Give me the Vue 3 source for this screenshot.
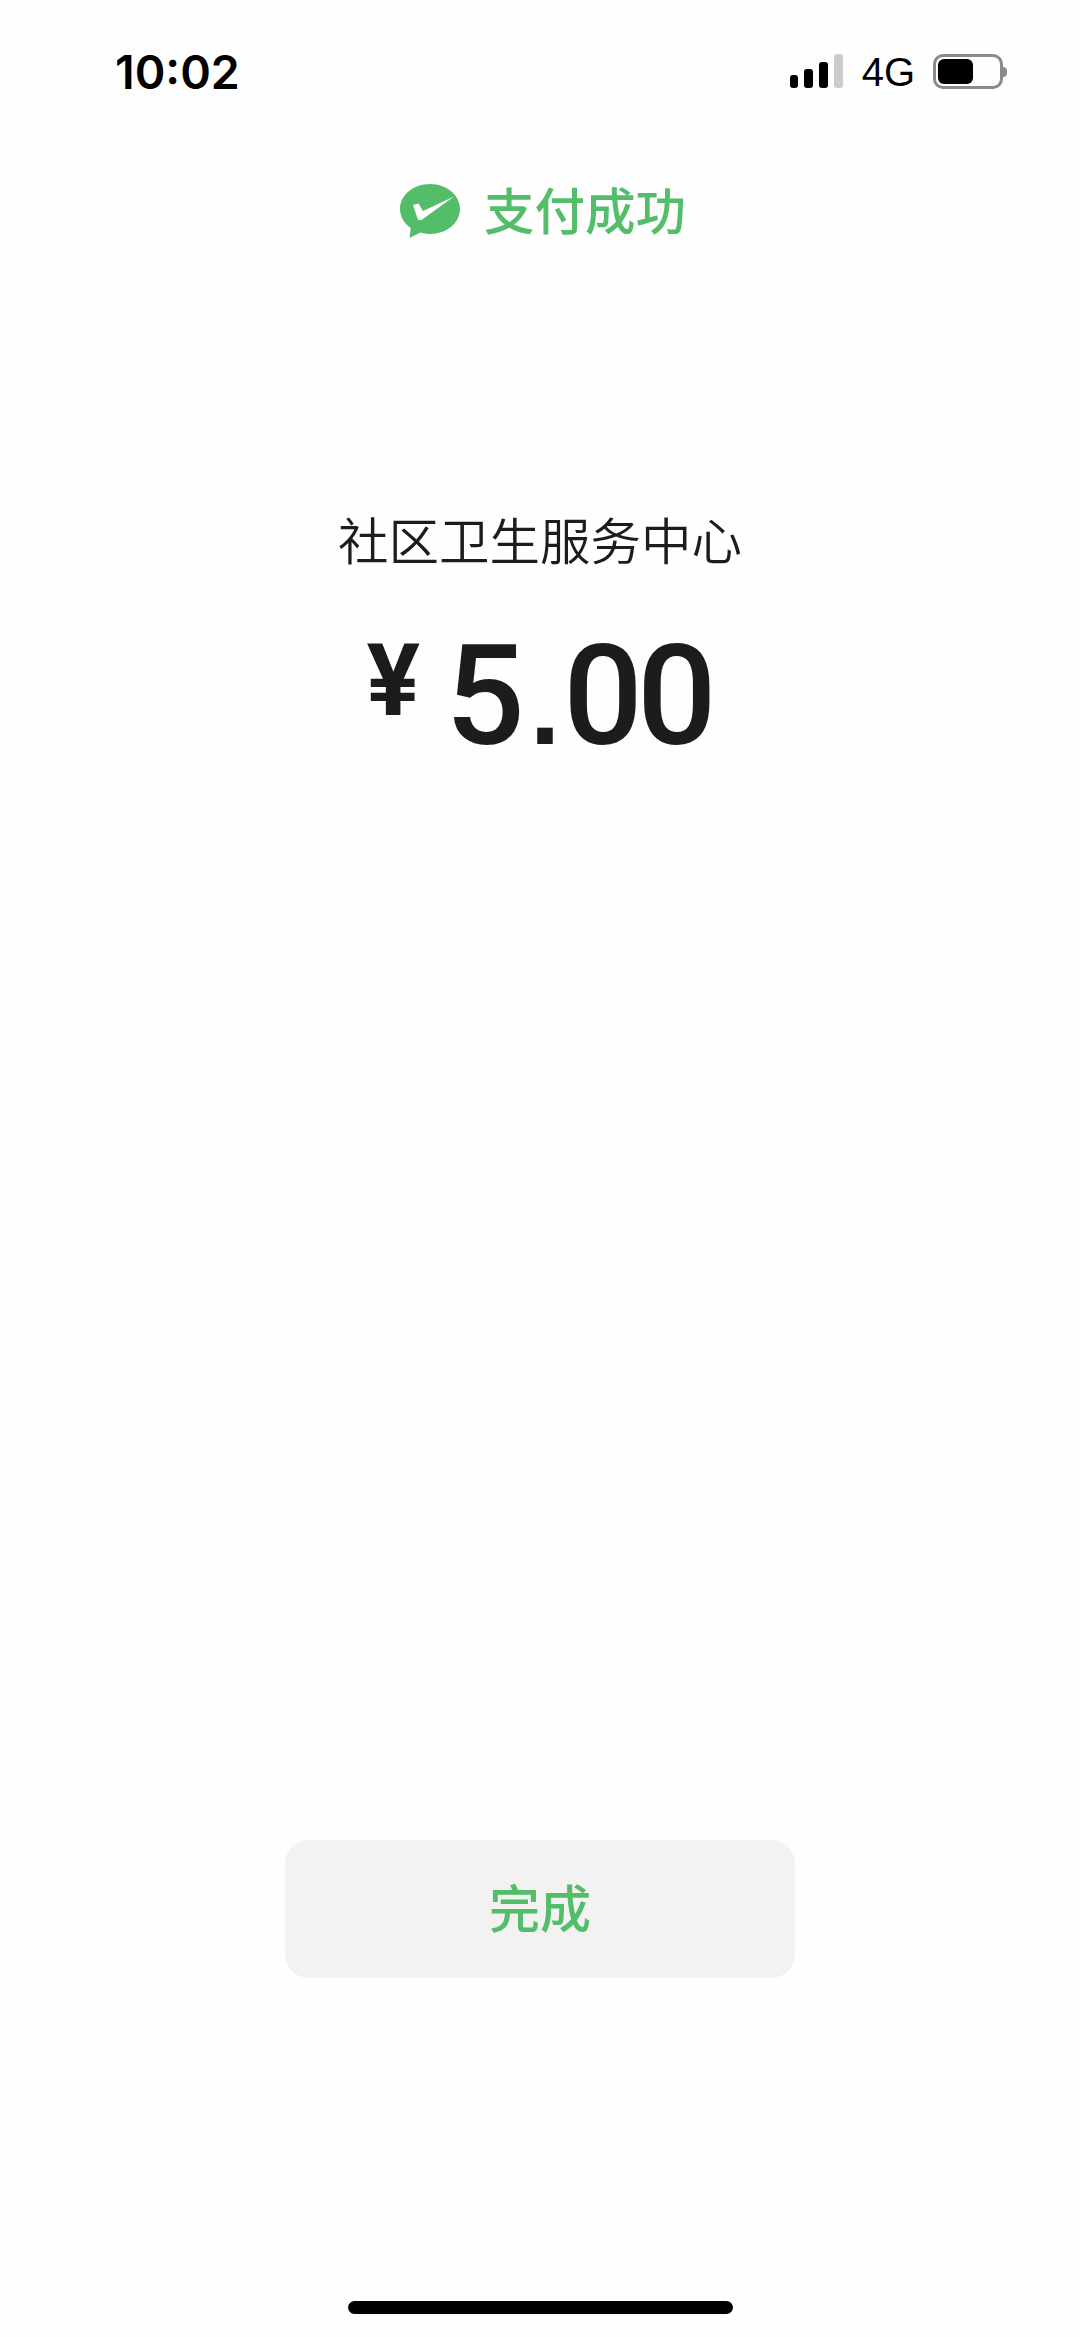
<script setup>
const merchant = '社区卫生服务中心'
const bars = [
  { id: 1, height: 13, dim: false },
  { id: 2, height: 19, dim: false },
  { id: 3, height: 26, dim: false },
  { id: 4, height: 34, dim: true },
]
</script>

<template>
  <div class="page">
    <header class="status">
      <span class="time">10:02</span>
      <div class="status-right">
        <div class="signal">
          <i v-for="b in bars" :key="b.id" class="bar" :class="{ dim: b.dim }" :style="{ height: b.height + 'px' }"></i>
        </div>
        <span class="net">4G</span>
        <div class="battery">
          <div class="battery-body"><div class="battery-fill"></div></div>
          <div class="battery-nub"></div>
        </div>
      </div>
    </header>

    <div class="result">
      <svg class="logo" width="60" height="54" viewBox="0 0 60 54" aria-hidden="true">
        <path d="M30 0C13.400 0 0 11.200 0 25c0 7.600 4.200 14.500 10.800 19L9.500 54l11-5.500c3 .8 6.200 1.500 9.500 1.500 16.600 0 30-11.200 30-25S46.600 0 30 0Z" fill="#53bd6a"/>
        <path d="M13 21l5.500-1.500 4.500 7.500L54 12.500 21.500 36h-3.500Z" fill="#fff"/>
      </svg>
      <span class="result-text">支付成功</span>
    </div>

    <div class="merchant">{{ merchant }}</div>
    <div class="amount">
      <span class="yen">¥</span>
      <span class="value">5<span class="dot">.</span>00</span>
    </div>

    <button class="done">完成</button>
    <div class="home"></div>
  </div>
</template>

<style>
html, body { margin: 0; background: #fefefe; }
</style>

<style scoped>
.page {
  width: 1080px;
  height: 2337px;
  background: #fefefe;
  display: flex;
  flex-direction: column;
  align-items: center;
  font-family: "Noto Sans CJK SC", "Noto Sans", sans-serif;
  overflow: hidden;
}
.status {
  width: 100%;
  box-sizing: border-box;
  height: 184px;
  padding: 45px 73px 0 115px;
  display: flex;
  justify-content: space-between;
  align-items: flex-start;
}
.time {
  font-family: Inter, sans-serif;
  font-size: 46.500px;
  font-weight: 600;
  line-height: 54px;
  color: #000;
}
.status-right {
  display: flex;
  align-items: flex-start;
  margin-top: 9px;
}
.signal {
  width: 53px;
  height: 34px;
  display: flex;
  align-items: flex-end;
  gap: 6px;
}
.bar {
  width: 9px;
  background: #000;
  border-radius: 3px;
}
.bar.dim { background: #cccccc; }
.net {
  margin-left: 19px;
  font-family: "Liberation Sans", sans-serif;
  font-size: 40px;
  line-height: 36px;
  color: #000;
}
.battery {
  margin-left: 18px;
  display: flex;
  align-items: center;
  height: 35px;
}
.battery-body {
  box-sizing: border-box;
  width: 70px;
  height: 35px;
  border: 3px solid #8a8a8a;
  border-radius: 10px;
  padding: 2px;
}
.battery-fill {
  width: 35px;
  height: 25px;
  background: #000;
  border-radius: 6px;
}
.battery-nub {
  width: 4px;
  height: 10px;
  background: #8a8a8a;
  border-radius: 0 5px 5px 0;
}
.result {
  height: 54px;
  padding-left: 6px;
  display: flex;
  align-items: center;
  gap: 24px;
}
.result-text {
  padding-bottom: 6px;
  font-size: 50.500px;
  font-weight: 500;
  line-height: 54px;
  color: #53bd6a;
}
.merchant {
  margin-top: 270px;
  font-size: 50.500px;
  font-weight: 350;
  line-height: 60px;
  color: #1c1c1c;
}
.amount {
  margin-top: 53px;
  margin-right: 3px;
  display: flex;
  align-items: flex-start;
  color: #1c1c1c;
  font-family: Roboto, sans-serif;
}
.yen {
  font-size: 100px;
  font-weight: 700;
  line-height: 120px;
}
.value {
  margin-top: 10px;
  margin-left: 25px;
  font-size: 140px;
  font-weight: 500;
  line-height: 130px;
  letter-spacing: -6px;
}
.dot {
  margin: 0 9px 0 11px;
  font-family: "Liberation Sans", sans-serif;
  font-size: 110px;
  font-weight: 700;
}
.done {
  margin-top: auto;
  width: 510px;
  height: 138px;
  border: 0;
  border-radius: 24px;
  background: #f2f2f2;
  color: #53bd6a;
  font-family: inherit;
  font-size: 51px;
  font-weight: 500;
  padding: 0 0 6px;
}
.home {
  margin-top: 323px;
  margin-bottom: 23px;
  width: 385px;
  height: 13px;
  border-radius: 7px;
  background: #000;
}
</style>
